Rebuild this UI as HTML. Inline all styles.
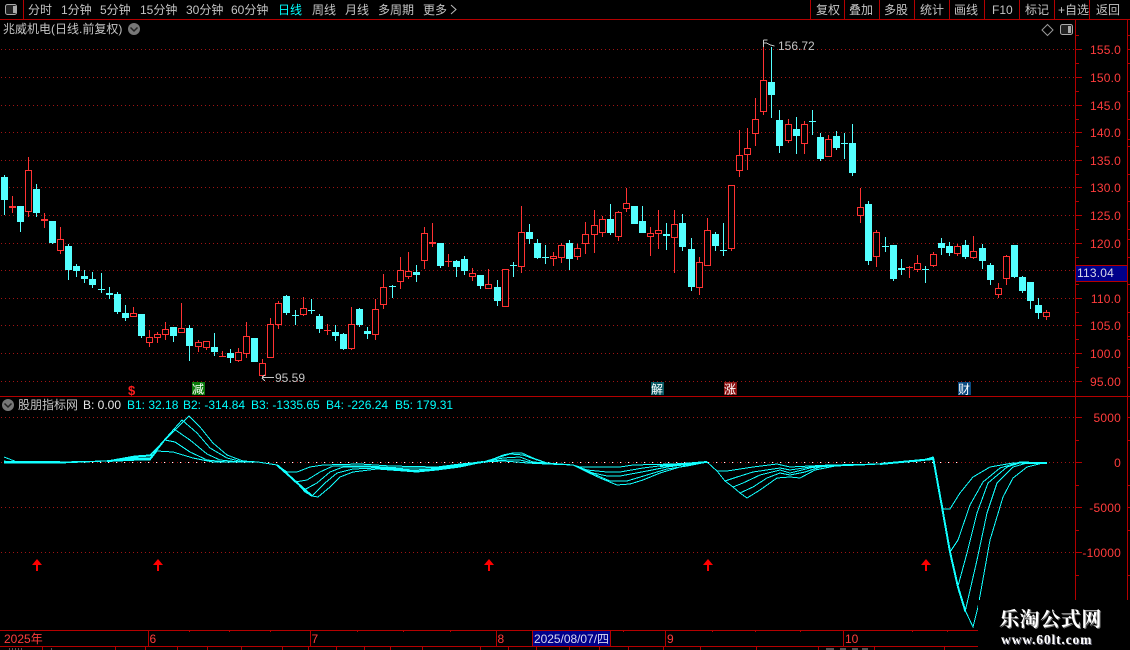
<!DOCTYPE html>
<html><head><meta charset="utf-8"><style>
html,body{margin:0;padding:0;background:#000;width:1130px;height:650px;overflow:hidden}
svg{display:block}
text{font-family:"Liberation Sans","WenQuanYi Zen Hei","Noto Sans CJK SC",sans-serif;font-size:12px}
.t{fill:#c4c4c4}.r{fill:#ff3c3c;text-anchor:end;letter-spacing:.2px}.c{fill:#0ff}
</style></head><body>
<svg width="1130" height="650" viewBox="0 0 1130 650" xmlns="http://www.w3.org/2000/svg">
<defs><pattern id="d" x="1" y="0" width="4" height="1" patternUnits="userSpaceOnUse"><rect width="1" height="1" fill="#a01414"/></pattern>
<pattern id="w" x="4" y="0" width="8" height="1" patternUnits="userSpaceOnUse"><rect width="1" height="1" fill="#fff"/></pattern></defs>
<rect width="1130" height="650" fill="#000"/>
<!-- grid -->
<g fill="url(#d)">
<rect y="49" width="1075" height="1"/><rect y="77" width="1075" height="1"/><rect y="105" width="1075" height="1"/><rect y="132" width="1075" height="1"/><rect y="160" width="1075" height="1"/><rect y="187" width="1075" height="1"/><rect y="215" width="1075" height="1"/><rect y="243" width="1075" height="1"/><rect y="270" width="1075" height="1"/><rect y="298" width="1075" height="1"/><rect y="325" width="1075" height="1"/><rect y="353" width="1075" height="1"/><rect y="381" width="1075" height="1"/>
<rect y="417" width="1075" height="1"/><rect y="462" width="1075" height="1"/><rect y="507" width="1075" height="1"/><rect y="552" width="1075" height="1"/>
</g>
<rect y="462" width="960" height="1" fill="url(#w)"/>
<!-- frame -->
<g stroke="#b40000" fill="none" shape-rendering="crispEdges">
<path d="M0 19.500H1130M0 396.500H1075M23.500 0V19M810.500 0V19M844.500 0V19M879.500 0V19M914.500 0V19M949.500 0V19M984.500 0V19M1019.500 0V19M1054.500 0V19M1089.500 0V19"/>
<path d="M1075.500 19V600M1127.500 19V600M1075 396.500H1130"/>
<path d="M0 630.500H978M0 646.500H978M148.500 631V646M310.500 631V646M496.500 631V646M532.500 631V646M610.500 631V646M665.500 631V646M843.500 631V646"/>
<path d="M189.500 630v2M229.500 630v2M270.500 630v2M357.500 630v2M403.500 630v2M450.500 630v2M623.500 630v2M712.500 630v2M755.500 630v2M800.500 630v2M912.500 630v2M947.500 630v2"/>
<path d="M42.500 646v4M115.500 646v4M145.500 646v4M177.500 646v4M207.500 646v4M241.500 646v4M282.500 646v4M308.500 646v4M336.500 646v4M364.500 646v4M390.500 646v4M422.500 646v4M480.500 646v4M508.500 646v4M536.500 646v4M569.500 646v4M599.500 646v4M628.500 646v4M663.500 646v4M700.500 646v4M756.500 646v4M818.500 646v4M874.500 646v4M944.500 646v4"/>
<!-- axis ticks -->
<path d="M1076 49.500h6M1076 77.500h6M1076 105.500h6M1076 132.500h6M1076 160.500h6M1076 187.500h6M1076 215.500h6M1076 243.500h6M1076 298.500h6M1076 325.500h6M1076 353.500h6M1076 381.500h6"/>
<path d="M1076 35.500h3M1076 63.500h3M1076 91.500h3M1076 119.500h3M1076 146.500h3M1076 174.500h3M1076 201.500h3M1076 229.500h3M1076 257.500h3M1076 284.500h3M1076 312.500h3M1076 339.500h3M1076 367.500h3"/>
<path d="M1076 417.500h6M1076 462.500h6M1076 507.500h6M1076 552.500h6M1076 440.500h3M1076 485.500h3M1076 530.500h3M1076 575.500h3"/>
<path d="M1127 35.500h3M1127 63.500h3M1127 91.500h3M1127 119.500h3M1127 146.500h3M1127 174.500h3M1127 201.500h3M1127 229.500h3M1127 257.500h3M1127 284.500h3M1127 312.500h3M1127 339.500h3M1127 367.500h3M1127 440.500h3M1127 485.500h3M1127 530.500h3M1127 575.500h3"/>
<path d="M1127 49.500h3M1127 139.500h3M1127 239.500h3M1127 336.500h3M1127 417.500h3M1127 507.500h3"/>
</g>
<!-- top bar -->
<rect x="5.500" y="4.500" width="11" height="10" rx="2" fill="#222" stroke="#aaa"/><rect x="13" y="6" width="3" height="7" fill="#aaa"/>
<g class="t">
<text x="28" y="14">分时</text><text x="61" y="14">1分钟</text><text x="100" y="14">5分钟</text><text x="140" y="14">15分钟</text><text x="186" y="14">30分钟</text><text x="231" y="14">60分钟</text>
<text x="278" y="14" style="fill:#0ff">日线</text><text x="312" y="14">周线</text><text x="345" y="14">月线</text><text x="378" y="14">多周期</text><text x="423" y="14">更多</text>
<text x="816" y="14">复权</text><text x="849" y="14">叠加</text><text x="884" y="14">多股</text><text x="920" y="14">统计</text><text x="954" y="14">画线</text><text x="992" y="14">F10</text><text x="1025" y="14">标记</text><text x="1058" y="14">+自选</text><text x="1096" y="14">返回</text>
<text x="3" y="33">兆威机电(日线.前复权)</text>
</g>
<path d="M451 5l5 4.500-5 4.500" fill="none" stroke="#bbb"/>
<circle cx="134" cy="29" r="6" fill="#777"/><path d="M130.500 27.500l3.500 3.500 3.500-3.500" fill="none" stroke="#222" stroke-width="1.500"/>
<path d="M1047.500 24.500l5.500 5.500-5.500 5.500-5.500-5.500z" fill="none" stroke="#999"/>
<rect x="1060.500" y="24.500" width="12" height="10" rx="2" fill="#222" stroke="#aaa"/><rect x="1068" y="26" width="3" height="7" fill="#aaa"/>
<!-- candles: wicks -->
<g fill="none" shape-rendering="crispEdges">
<path stroke="#ff3232" d="M28.500 157V217M60.500 227V254M133.500 307V317M149.500 330V347M157.500 332V343M165.500 322V340M181.500 303V333M198.500 340V352M206.500 341V350M238.500 348V362M246.500 322V358M262.500 359V376M270.500 318V358M278.500 301V329M303.500 297V316M351.500 307V350M375.500 299V340M383.500 274V309M400.500 257V289M408.500 252V279M424.500 227V269M472.500 268V281M488.500 269V289M505.500 269V307M521.500 206V273M553.500 252V266M561.500 243V263M577.500 244V260M585.500 222V254M594.500 210V253M602.500 216V237M618.500 211V241M626.500 188V212M650.500 227V256M658.500 210V249M674.500 210V273M699.500 257V295M707.500 218V266M731.500 185V251M739.500 130V177M747.500 128V170M755.500 98V146M763.500 42V115M788.500 119V143M804.500 121V154M828.500 135V157M860.500 188V223M876.500 230V267M917.500 255V272M933.500 252V267M957.500 244V256M973.500 236V259M998.500 283V298M1006.500 255V285M1046.500 310V320M12.500 196V213M44.500 213V228M222.500 351V357M327.500 324V335M432.500 223V247M448.500 254V267M909.500 266V278"/>
<path stroke="#54ffff" d="M4.500 175V215M20.500 206V232M36.500 184V217M52.500 221V244M68.500 244V280M76.500 264V277M84.500 270V283M92.500 272V288M101.500 273V293M109.500 287V299M117.500 292V314M125.500 305V321M141.500 314V338M173.500 327V342M189.500 325V361M214.500 333V356M230.500 349V363M254.500 338V362M286.500 295V315M295.500 310V325M311.500 299V314M319.500 314V333M335.500 325V341M343.500 333V350M359.500 308V327M367.500 327V339M392.500 285V298M416.500 265V282M440.500 243V268M456.500 260V277M464.500 256V275M480.500 275V289M497.500 280V306M513.500 262V277M529.500 224V244M537.500 239V259M545.500 245V264M569.500 240V270M610.500 204V235M634.500 206V224M642.500 206V233M666.500 223V250M682.500 214V251M691.500 238V291M715.500 232V251M723.500 223V256M771.500 47V118M779.500 110V153M796.500 117V154M812.500 110V135M820.500 133V161M836.500 131V150M844.500 133V159M852.500 124V176M868.500 201V265M885.500 237V252M893.500 245V281M901.500 259V275M925.500 266V283M941.500 238V255M949.500 242V256M965.500 240V259M982.500 244V269M990.500 263V285M1014.500 245V278M1022.500 276V293M1030.500 282V309M1038.500 298V319"/>
<!-- red hollow bodies -->
<path stroke="#ff3232" fill="#000" d="M25.500 170.500h6V211.500h-6zM57.500 239.500h6V250.500h-6zM130.500 313.500h6V316.500h-6zM146.500 337.500h6V342.500h-6zM154.500 334.500h6V337.500h-6zM162.500 329.500h6V334.500h-6zM178.500 328.500h6V332.500h-6zM195.500 342.500h6V346.500h-6zM203.500 341.500h6V347.500h-6zM235.500 352.500h6V360.500h-6zM243.500 336.500h6V353.500h-6zM259.500 363.500h6V375.500h-6zM267.500 324.500h6V357.500h-6zM275.500 303.500h6V324.500h-6zM300.500 308.500h6V314.500h-6zM348.500 324.500h6V348.500h-6zM372.500 309.500h6V334.500h-6zM380.500 287.500h6V304.500h-6zM397.500 270.500h6V281.500h-6zM405.500 271.500h6V276.500h-6zM421.500 233.500h6V260.500h-6zM469.500 273.500h6V276.500h-6zM485.500 284.500h6V288.500h-6zM502.500 269.500h6V306.500h-6zM518.500 232.500h6V266.500h-6zM550.500 256.500h6V258.500h-6zM558.500 245.500h6V257.500h-6zM574.500 248.500h6V256.500h-6zM582.500 234.500h6V243.500h-6zM591.500 225.500h6V234.500h-6zM599.500 219.500h6V232.500h-6zM615.500 212.500h6V236.500h-6zM623.500 203.500h6V208.500h-6zM647.500 233.500h6V236.500h-6zM655.500 230.500h6V233.500h-6zM671.500 224.500h6V237.500h-6zM696.500 262.500h6V287.500h-6zM704.500 230.500h6V265.500h-6zM728.500 185.500h6V248.500h-6zM736.500 155.500h6V170.500h-6zM744.500 148.500h6V154.500h-6zM752.500 119.500h6V133.500h-6zM760.500 80.500h6V111.500h-6zM785.500 124.500h6V140.500h-6zM801.500 124.500h6V143.500h-6zM825.500 139.500h6V156.500h-6zM857.500 207.500h6V215.500h-6zM873.500 232.500h6V256.500h-6zM914.500 263.500h6V269.500h-6zM930.500 254.500h6V265.500h-6zM954.500 246.500h6V253.500h-6zM970.500 251.500h6V257.500h-6zM995.500 288.500h6V294.500h-6zM1003.500 256.500h6V278.500h-6zM1043.500 312.500h6V316.500h-6z"/>
<!-- red solid crosses -->
<path fill="#ff3232" d="M9 206h7v2h-7zM41 219h7v2h-7zM219 356h7v1h-7zM324 330h7v1h-7zM429 242h7v2h-7zM445 261h7v1h-7zM906 267h7v1h-7z"/>
<!-- cyan bodies -->
<path fill="#54ffff" d="M1 177h7v23h-7zM17 206h7v16h-7zM33 189h7v24h-7zM49 221h7v22h-7zM65 246h7v24h-7zM73 266h7v5h-7zM81 276h7v3h-7zM89 279h7v6h-7zM98 289h7v1h-7zM106 293h7v2h-7zM114 294h7v18h-7zM122 313h7v5h-7zM138 314h7v22h-7zM170 327h7v9h-7zM186 328h7v18h-7zM211 347h7v5h-7zM227 353h7v5h-7zM251 338h7v24h-7zM283 296h7v17h-7zM292 315h7v1h-7zM308 310h7v1h-7zM316 316h7v13h-7zM332 332h7v4h-7zM340 334h7v15h-7zM356 309h7v16h-7zM364 331h7v3h-7zM389 286h7v1h-7zM413 272h7v3h-7zM437 243h7v23h-7zM453 261h7v6h-7zM461 259h7v12h-7zM477 275h7v11h-7zM494 287h7v14h-7zM510 265h7v1h-7zM526 232h7v7h-7zM534 243h7v15h-7zM542 257h7v1h-7zM566 243h7v16h-7zM607 219h7v14h-7zM631 206h7v18h-7zM639 221h7v12h-7zM663 234h7v2h-7zM679 223h7v24h-7zM688 249h7v38h-7zM712 234h7v12h-7zM720 250h7v1h-7zM768 82h7v13h-7zM776 120h7v26h-7zM793 129h7v7h-7zM809 121h7v1h-7zM817 137h7v22h-7zM833 136h7v12h-7zM841 143h7v1h-7zM849 143h7v30h-7zM865 204h7v57h-7zM882 246h7v1h-7zM890 245h7v34h-7zM898 268h7v2h-7zM922 269h7v1h-7zM938 243h7v5h-7zM946 246h7v7h-7zM962 245h7v12h-7zM979 248h7v13h-7zM987 265h7v15h-7zM1011 245h7v32h-7zM1019 277h7v14h-7zM1027 282h7v19h-7zM1035 305h7v8h-7z"/>
</g>
<!-- annotations -->
<g fill="none" stroke="#c8c8c8" shape-rendering="crispEdges">
<path d="M763.500 40V47M763.500 40h4M763.500 43h3l4 2 4 1"/>
<path d="M262 377.500h12M262 377l3-2M262 378l3 3"/>
</g>
<text x="778" y="50" class="t">156.72</text>
<text x="275" y="382" class="t">95.59</text>
<!-- signal labels -->
<text x="128" y="395" style="fill:#ff1e1e;font-weight:bold;font-size:13px">$</text>
<rect x="192" y="382" width="13" height="13" fill="#0a7a0a"/><text x="192" y="393.500" style="fill:#fff">减</text>
<rect x="651" y="382" width="13" height="13" fill="#0a5a64"/><text x="651" y="393.500" style="fill:#fff">解</text>
<rect x="724" y="382" width="13" height="13" fill="#8c1414"/><text x="724" y="393.500" style="fill:#fff">涨</text>
<rect x="958" y="382" width="13" height="13" fill="#0a4a80"/><text x="958" y="393.500" style="fill:#fff">财</text>
<!-- axis labels -->
<g class="r">
<text x="1121" y="54">155.0</text><text x="1121" y="82">150.0</text><text x="1121" y="110">145.0</text><text x="1121" y="137">140.0</text><text x="1121" y="165">135.0</text><text x="1121" y="192">130.0</text><text x="1121" y="220">125.0</text><text x="1121" y="248">120.0</text><text x="1121" y="303">110.0</text><text x="1121" y="330">105.0</text><text x="1121" y="358">100.0</text><text x="1121" y="386">95.00</text>
<text x="1121" y="422">5000</text><text x="1121" y="467">0</text><text x="1121" y="512">-5000</text><text x="1121" y="557">-10000</text>
</g>
<rect x="1076" y="265" width="51" height="16" fill="#00008a"/>
<path d="M1075 265.500H1127M1075 281.500H1127" stroke="#b40000" shape-rendering="crispEdges"/>
<text x="1077" y="277" style="fill:#d8d8e8;letter-spacing:.2px">113.04</text>
<!-- indicator header -->
<circle cx="8" cy="405" r="6" fill="#777"/><path d="M4.500 403.500l3.500 3.500 3.500-3.500" fill="none" stroke="#222" stroke-width="1.500"/>
<text x="18" y="409" class="t">股朋指标网</text>
<text x="83" y="409" style="fill:#e8e8e8">B: 0.00</text>
<text x="127" y="409" class="c">B1: 32.18</text><text x="183" y="409" class="c">B2: -314.84</text><text x="251" y="409" class="c">B3: -1335.65</text><text x="326" y="409" class="c">B4: -226.24</text><text x="395" y="409" class="c">B5: 179.31</text>
<!-- indicator lines -->
<g fill="none" stroke="#1ff" stroke-width="1" shape-rendering="crispEdges">
<path d="M4 457L17 462L60 462L107 461L135 456L150 455L189 416L200 427L213 443L227 455L243 461L258 462L277 465L287 473L297 483L305 492L312 496L318 497L330 487L340 477L353 472L377 469L417 472L437 470L460 467L483 462L493 459L503 455L513 453L522 453L533 458L547 463L573 465L587 472L600 478L617 485L630 484L643 480L660 473L680 467L693 464L707 462L717 471L725 481L733 487L740 493L747 498L760 490L777 478L790 477L800 478L815 470L835 466L860 465L880 464L920 461L933 457L942 507L950 552L958 587L965 610L973 627L978 607L990 540L1003 497L1013 478L1027 467L1043 463L1047 463"/>
<path d="M4 463L17 463L60 462L107 461L135 457L150 456L182 420L197 433L210 448L227 458L243 462L258 462L277 465L287 473L297 483L305 492L312 496L325 483L337 473L353 469L377 468L417 471L437 469L460 466L483 462L500 457L510 454L523 455L537 460L547 463L573 465L587 471L603 478L610 481L627 481L647 475L667 469L687 466L707 462L717 471L725 481L733 487L740 493L753 487L767 478L780 473L790 475L805 472L820 467L840 465L880 464L920 461L933 457L942 507L950 552L958 587L965 612L977 560L987 513L997 483L1013 467L1027 463L1047 463"/>
<path d="M4 461L17 463L60 463L107 461L135 458L150 458L174 429L190 440L207 454L220 460L240 462L258 462L277 465L287 473L297 483L304 490L317 483L330 472L343 467L373 467L413 470L437 469L460 466L483 462L503 458L520 457L533 462L547 463L573 465L593 473L607 476L620 476L647 471L667 467L707 462L717 471L725 481L733 487L743 483L760 475L780 470L790 473L810 468L830 465L880 464L920 461L933 457L942 507L950 552L958 586L967 553L977 513L988 483L1007 467L1023 462L1047 463"/>
<path d="M4 462L17 462L60 463L107 461L135 459L150 459L165 440L175 442L190 452L207 460L227 462L258 462L277 465L287 473L295 482L307 480L320 472L333 466L367 466L400 468L437 468L460 465L483 462L503 460L520 460L533 463L547 464L573 465L587 470L607 472L620 472L643 468L667 465L707 462L717 471L725 481L737 477L753 472L780 468L790 470L810 467L830 465L880 464L920 461L933 457L942 507L950 552L958 540L970 505L983 482L1000 468L1020 462L1047 463"/>
<path d="M4 463L17 462L60 462L107 461L135 460L150 460L157 451L173 452L193 458L213 462L258 462L277 465L287 472L297 472L310 467L323 465L360 464L390 466L437 467L460 464L483 462L503 461L517 462L527 463L547 464L573 465L580 467L590 467L620 467L633 465L673 464L707 462L717 471L727 471L753 467L777 464L790 467L810 466L830 465L880 464L920 461L933 457L943 509L950 509L960 493L973 477L990 467L1013 463L1047 463"/>
<path stroke-width="2" d="M4 462L60 462M107 461L150 459M277 465L312 496M933 457L942 507L950 552L958 587L965 610M1022 463L1047 463M460 465L483 462M660 466L707 462M880 464L933 459"/>
</g>
<!-- arrows -->
<path fill="#ff0000" d="M37 559l5 6h-4v6h-2v-6h-4zM158 559l5 6h-4v6h-2v-6h-4zM489 559l5 6h-4v6h-2v-6h-4zM708 559l5 6h-4v6h-2v-6h-4zM926 559l5 6h-4v6h-2v-6h-4z"/>
<!-- time axis -->
<g style="fill:#ff3c3c">
<text x="4" y="643">2025年</text><text x="149.500" y="643">6</text><text x="311.500" y="643">7</text><text x="497.500" y="643">8</text><text x="667" y="643">9</text><text x="845" y="643">10</text>
</g>
<rect x="533" y="631" width="77" height="15" fill="#00008a"/>
<text x="534" y="643" style="fill:#d8d8f0" textLength="75">2025/08/07/四</text>
<path d="M9 649h1M12 649h1M15 649h1M18 649h1M21 649h1M51 649h1M826 649h8M840 649h6M852 649h6M862 649h6" stroke="#aaa" shape-rendering="crispEdges"/>
<!-- watermark -->
<rect x="978" y="600" width="152" height="50" fill="#000"/>
<text x="1000" y="627" style="font-family:'Noto Serif CJK SC','Liberation Serif',serif;font-size:20px;font-weight:bold;fill:#777;letter-spacing:.6px">乐淘公式网</text>
<text x="999" y="626" style="font-family:'Noto Serif CJK SC','Liberation Serif',serif;font-size:20px;font-weight:bold;fill:#fff;letter-spacing:.6px">乐淘公式网</text>
<text x="1002" y="645" style="font-family:'Liberation Serif',serif;font-size:13.500px;font-weight:bold;fill:#667;letter-spacing:.85px">www.60lt.com</text>
<text x="1001" y="644" style="font-family:'Liberation Serif',serif;font-size:13.500px;font-weight:bold;fill:#fff;letter-spacing:.85px">www.60lt.com</text>
</svg>
</body></html>
